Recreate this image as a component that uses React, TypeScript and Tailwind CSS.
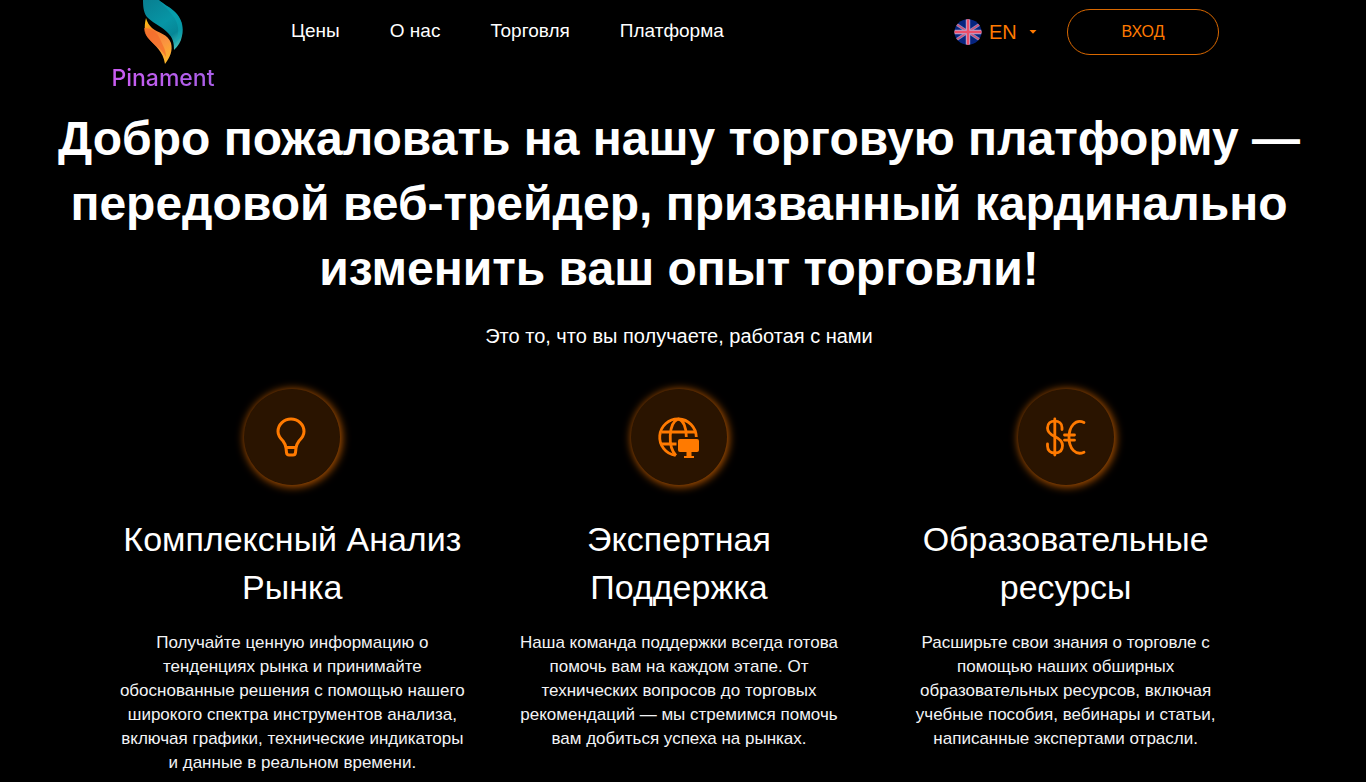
import type { ReactNode } from "react";

const navLinks = [
  { label: "Цены", href: "#prices" },
  { label: "О нас", href: "#about" },
  { label: "Торговля", href: "#trading" },
  { label: "Платформа", href: "#platform" },
];

function Logo() {
  return (
    <a href="#home" className="flex w-32 flex-col items-center">
      <svg className="h-16 w-10" viewBox="0 0 40 64" fill="none" aria-hidden="true">
        <defs>
          <linearGradient id="teal" x1="2" y1="0" x2="36" y2="48" gradientUnits="userSpaceOnUse">
            <stop stopColor="#087f91" />
            <stop offset="0.5" stopColor="#0795a5" />
            <stop offset="0.75" stopColor="#068797" />
            <stop offset="1" stopColor="#48c5bc" />
          </linearGradient>
          <linearGradient id="flame" x1="4" y1="22" x2="28" y2="60" gradientUnits="userSpaceOnUse">
            <stop stopColor="#fdb913" />
            <stop offset="0.25" stopColor="#f47b31" />
            <stop offset="0.6" stopColor="#fa9440" />
            <stop offset="1" stopColor="#fbb829" />
          </linearGradient>
        </defs>
        <path d="M0 0C0 8 1 14 5 18C11 24 20 27 25 33C30 38 31 43 31 50C35 46 38 42 39 36C41 27 39 19 32 12C27 7 20 4 16 0Z" fill="url(#teal)" />
        <path d="M16 0C21 7 29 12 33 21C37 29 35 37 31 44C34 41 38 38 39 33C40 25 38 18 32 12C27 7 20 4 16 0Z" fill="#0aa5b2" fillOpacity="0.55" />
        <path d="M3 18C1 26 1 34 6 39C12 46 20 51 22 64C27 57 30 51 28 43C25 34 15 33 9 28C6 25 4 22 3 18Z" fill="url(#flame)" />
        <path d="M1 28C9 28 14 32 17 39C20 46 23 50 23 57C19 49 11 45 6 39C3 36 1 32 1 28Z" fill="#f36b2c" fillOpacity="0.7" />
      </svg>
      <span className="bg-gradient-to-r from-[#cb5cf2] to-[#a95fe8] bg-clip-text font-[Inter,sans-serif] text-[23px] leading-7 font-medium text-transparent">
        Pinament
      </span>
    </a>
  );
}

function FlagIcon() {
  return (
    <svg className="h-[26px] w-7" viewBox="0 0 28 26" preserveAspectRatio="none" aria-hidden="true">
      <clipPath id="flag">
        <ellipse cx="14" cy="13" rx="13.5" ry="12.7" />
      </clipPath>
      <g clipPath="url(#flag)">
        <path fill="#06247f" d="M0 0h28v26H0z" />
        <path d="M2 5l24 16M26 5L2 21" stroke="#8b8cbb" strokeWidth="3" />
        <path d="M2 5l24 16M26 5L2 21" stroke="#d94a72" strokeWidth="1.5" />
        <path d="M14 0v26M0 13h28" stroke="#b9a5d0" strokeWidth="4.4" />
        <path d="M14 0v26M0 13h28" stroke="#ed4e68" strokeWidth="2.4" />
      </g>
    </svg>
  );
}

function Header() {
  return (
    <header className="mx-auto flex w-full max-w-[1160px] items-start pr-10">
      <Logo />
      <nav className="ml-16 flex gap-[50px] pt-4">
        {navLinks.map((link) => (
          <a key={link.href} href={link.href} className="text-[19px] leading-[30px] text-white">
            {link.label}
          </a>
        ))}
      </nav>
      <div className="ml-auto flex items-center gap-[30px] pt-[9px]">
        <div className="flex items-center gap-[7px] text-[#ff7a00]">
          <FlagIcon />
          <div className="relative flex items-center">
            <select
              aria-label="Язык"
              className="h-8 w-12 appearance-none bg-transparent text-xl leading-8 outline-none"
            >
              <option>EN</option>
            </select>
            <svg className="pointer-events-none absolute right-0 h-1 w-2" viewBox="0 0 8 4" aria-hidden="true">
              <path d="M0.5 0h7L4 3.8z" fill="currentColor" />
            </svg>
          </div>
        </div>
        <button
          type="button"
          className="h-[46px] w-[152px] rounded-full border border-[#d96800] text-base text-[#ff7a00]"
        >
          ВХОД
        </button>
      </div>
    </header>
  );
}

function BulbIcon() {
  return (
    <svg className="h-12 w-12" viewBox="0 0 48 48" fill="none" stroke="currentColor" strokeWidth="3" strokeLinejoin="round" aria-hidden="true">
      <path d="M18 35C17.5 32 17 30.5 15 28C12 25 10 22 10 18.5C10 11.5 16 6 23 6S36 11.5 36 18.5C36 22 34 25 31 28C29 30.5 28.5 32 28 35L27.5 39.5Q27.2 42 25 42H21Q18.8 42 18.5 39.5Z" />
      <path d="M17.5 34.5h11" />
    </svg>
  );
}

function GlobeIcon() {
  return (
    <svg className="h-12 w-12" viewBox="0 0 48 48" fill="none" aria-hidden="true">
      <g stroke="currentColor" strokeWidth="2.8">
        <path d="M20.5 42.4A18.3 18.3 0 1 1 41.3 24" />
        <path d="M23 6C13.500 10 12.5 34 21 42.4" />
        <path d="M23 6C28.5 7 31.5 15 31.3 24" />
        <path d="M6.5 19h34M6.5 31h15" />
      </g>
      <path d="M25 26h17a2 2 0 0 1 2 2v9a2 2 0 0 1-2 2H36.5v4h2.5v2h-10V43H31.500v-4h-6.500a2 2 0 0 1-2-2V28a2 2 0 0 1 2-2z" fill="currentColor" />
    </svg>
  );
}

function CurrencyIcon() {
  return (
    <svg className="h-12 w-12" viewBox="0 0 48 48" fill="none" stroke="currentColor" strokeWidth="2.8" strokeLinecap="round" aria-hidden="true">
      <path d="M20 16.5V14.5C20 10.5 17 8.2 12.8 8.2S5.5 10.5 5.5 15C5.5 19.5 8.5 21.5 12.8 23.5S20.5 28 20.5 32.5C20.5 37.5 17.5 40 13 40S5.5 37.5 5.5 33V31" />
      <path d="M12.8 6v36" />
      <path d="M42 9.5C33.5 5.5 27 13.5 27 24.5C27 35.5 33.5 43 42 39.2M22.5 22h10M22.5 27.2h10" />
    </svg>
  );
}

interface FeatureProps {
  icon: ReactNode;
  title: string;
  text: string;
}

const features: FeatureProps[] = [
  {
    icon: <BulbIcon />,
    title: "Комплексный Анализ Рынка",
    text: "Получайте ценную информацию о тенденциях рынка и принимайте обоснованные решения с помощью нашего широкого спектра инструментов анализа, включая графики, технические индикаторы и данные в реальном времени.",
  },
  {
    icon: <GlobeIcon />,
    title: "Экспертная Поддержка",
    text: "Наша команда поддержки всегда готова помочь вам на каждом этапе. От технических вопросов до торговых рекомендаций — мы стремимся помочь вам добиться успеха на рынках.",
  },
  {
    icon: <CurrencyIcon />,
    title: "Образовательные ресурсы",
    text: "Расширьте свои знания о торговле с помощью наших обширных образовательных ресурсов, включая учебные пособия, вебинары и статьи, написанные экспертами отрасли.",
  },
];

function Feature({ icon, title, text }: FeatureProps) {
  return (
    <article className="flex flex-col items-center px-5 text-center">
      <div className="flex h-24 w-24 items-center justify-center rounded-full bg-[#2a1400] text-[#ff7a00] shadow-[1px_1px_8px_1px_#ff7a00b0]">
        {icon}
      </div>
      <h2 className="mt-[30px] text-[34px] leading-[48px]">{title}</h2>
      <p className="mt-5 text-[17px] leading-6 text-gray-100">{text}</p>
    </article>
  );
}

export default function App() {
  return (
    <div className="min-h-screen bg-black pr-2 font-['Liberation_Sans',Arial,sans-serif] text-white">
      <Header />
      <main>
        <section className="px-10 pt-3.5 text-center">
          <h1 className="text-5xl leading-[65px] font-bold">
            Добро пожаловать на нашу торговую платформу — передовой веб-трейдер, призванный кардинально изменить ваш
            опыт торговли!
          </h1>
          <p className="mt-5 text-xl leading-[30px]">Это то, что вы получаете, работая с нами</p>
        </section>
        <section className="mx-auto mt-[38px] grid max-w-[1160px] grid-cols-3">
          {features.map((feature) => (
            <Feature key={feature.title} {...feature} />
          ))}
        </section>
      </main>
    </div>
  );
}
